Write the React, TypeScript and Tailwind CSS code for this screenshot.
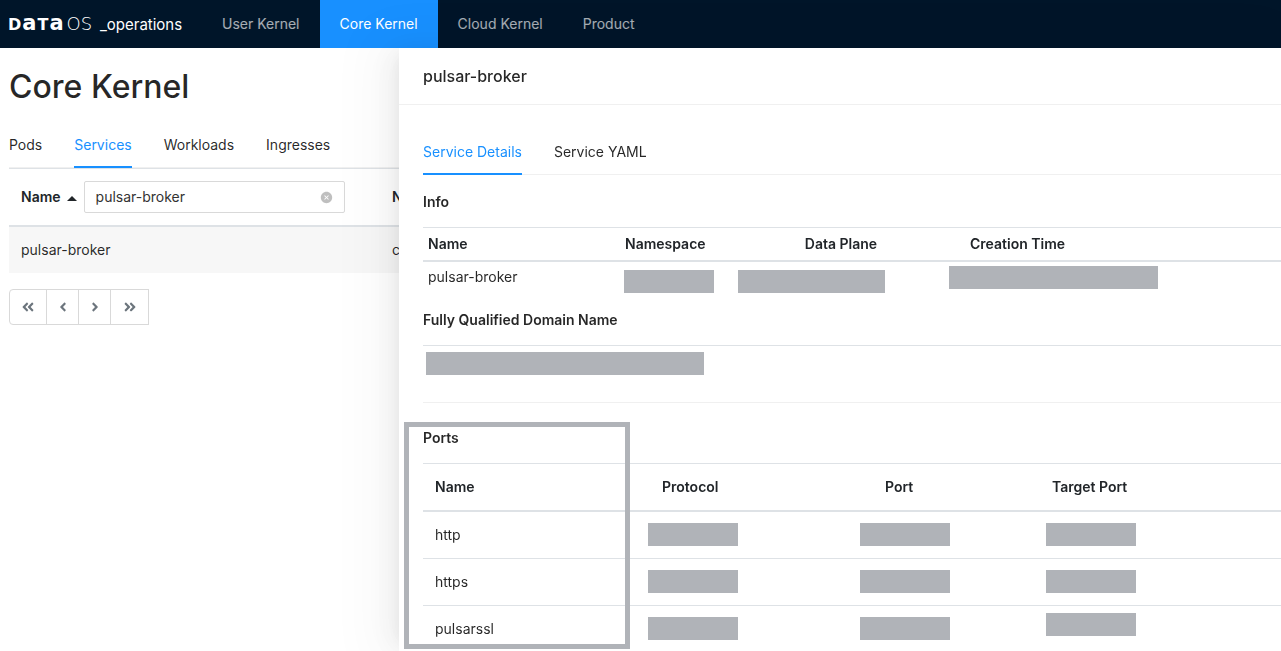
import type { ReactNode } from "react";
import { AiFillCloseCircle } from "react-icons/ai";
import { FaAngleDoubleLeft, FaAngleDoubleRight, FaAngleLeft, FaAngleRight } from "react-icons/fa";

const navItems = ["User Kernel", "Core Kernel", "Cloud Kernel", "Product"];
const pageTabs = ["Pods", "Services", "Workloads", "Ingresses"];
const drawerTabs = ["Service Details", "Service YAML"];
const ports = ["http", "https", "pulsarssl"];

function Logo() {
  return (
    <a href="#" aria-label="DataOS operations" className="flex h-12 w-[202px] items-center pb-0.5 pl-2 text-white">
      <span className="flex items-baseline leading-none">
        <span className="flex w-[92px] items-baseline gap-px whitespace-nowrap font-['DejaVu_Sans'] text-[16px] font-bold">
          <span>D</span>
          <span className="text-[21px]">a</span>
          <span>T</span>
          <span className="text-[21px]">a</span>
          <span className="pl-0.5 text-[18px] font-['DejaVu_Sans_Light','DejaVu_Sans'] font-extralight">OS</span>
        </span>
        <span className="text-[15px]">_operations</span>
      </span>
    </a>
  );
}

function TopNav() {
  return (
    <header className="flex h-12 bg-[#001529]">
      <Logo />
      <nav className="flex">
        {navItems.map((item) => (
          <a
            key={item}
            href="#"
            className={
              item === "Core Kernel"
                ? "bg-[#1890ff] px-5 leading-[48px] text-white"
                : "px-5 leading-[48px] text-white/65"
            }
          >
            {item}
          </a>
        ))}
      </nav>
    </header>
  );
}

function Tabs({ items, active }: { items: string[]; active: string }) {
  return (
    <div role="tablist" className="flex h-[46px] gap-8 shadow-[inset_0_-1px_0_#f0f0f0]">
      {items.map((item) => (
        <button
          key={item}
          type="button"
          role="tab"
          aria-selected={item === active}
          className={
            item === active
              ? "border-b-2 border-[#1890ff] pt-0.5 text-[#1890ff]"
              : "border-b-2 border-transparent pt-0.5"
          }
        >
          {item}
        </button>
      ))}
    </div>
  );
}

function PageButton({ label, className, children }: { label: string; className: string; children: ReactNode }) {
  return (
    <button
      type="button"
      aria-label={label}
      className={`flex h-9 items-center justify-center border border-[#d9d9d9] text-[#6c757d] ${className}`}
    >
      {children}
    </button>
  );
}

function ServicesPage() {
  return (
    <main className="px-[9px]">
      <h1 className="pt-[17px] text-[32px] leading-[44px] font-medium">Core Kernel</h1>
      <div className="pt-[13px]">
        <Tabs items={pageTabs} active="Services" />
      </div>
      <table className="w-full table-fixed border-separate border-spacing-0 border-t border-[#dee2e6] text-left">
        <colgroup>
          <col className="w-[371px]" />
          <col />
        </colgroup>
        <thead>
          <tr>
            <th className="h-[58px] border-b-2 border-[#dee2e6] px-3 font-semibold text-[#212529]">
              <div className="flex items-center">
                <label htmlFor="name-filter">Name</label>
                <svg viewBox="0 0 10 5" className="mt-0.5 ml-1.5 h-[5px] w-[10px]" fill="#212529">
                  <path d="M0 5 5 0l5 5z" />
                </svg>
                <div className="ml-[7px] flex h-8 w-[261px] items-center rounded-xs border border-[#d9d9d9] bg-white px-[11px]">
                  <input
                    id="name-filter"
                    type="text"
                    defaultValue="pulsar-broker"
                    className="min-w-0 flex-1 bg-transparent font-normal text-[#333333] outline-none"
                  />
                  <button type="button" aria-label="Clear filter" className="text-black/25">
                    <AiFillCloseCircle className="h-[13px] w-[13px]" />
                  </button>
                </div>
              </div>
            </th>
            <th className="border-b-2 border-[#dee2e6] px-3 font-semibold text-[#212529]">Namespace</th>
          </tr>
        </thead>
        <tbody>
          <tr className="bg-[#f7f7f7]">
            <td className="h-[46px] px-3">pulsar-broker</td>
            <td className="px-3">core</td>
          </tr>
        </tbody>
      </table>
      <div className="mt-4 flex">
        <PageButton label="First page" className="w-[38px] rounded-l">
          <FaAngleDoubleLeft className="h-[14px] w-[14px]" />
        </PageButton>
        <PageButton label="Previous page" className="-ml-px w-[33px]">
          <FaAngleLeft className="h-[14px] w-[14px]" />
        </PageButton>
        <PageButton label="Next page" className="-ml-px w-[33px]">
          <FaAngleRight className="h-[14px] w-[14px]" />
        </PageButton>
        <PageButton label="Last page" className="-ml-px w-[39px]">
          <FaAngleDoubleRight className="h-[14px] w-[14px]" />
        </PageButton>
      </div>
    </main>
  );
}

function Redacted({ className = "w-[90px]" }: { className?: string }) {
  return <div className={`h-[23px] bg-[#b0b3b8] ${className}`} />;
}

function InfoTable() {
  const head = "h-[34px] border-b-2 border-[#dee2e6] px-[5px] font-semibold text-[#212529]";
  return (
    <table className="w-full table-fixed border-separate border-spacing-0 border-t border-[#dee2e6] text-left">
      <colgroup>
        <col className="w-[197px]" />
        <col className="w-[114px]" />
        <col className="w-[214px]" />
        <col />
      </colgroup>
      <thead>
        <tr>
          <th className={head}>Name</th>
          <th className={head}>Namespace</th>
          <th className={`${head} text-center`}>Data Plane</th>
          <th className="border-b-2 border-[#dee2e6] pl-[22px] font-semibold text-[#212529]">Creation Time</th>
        </tr>
      </thead>
      <tbody>
        <tr className="align-top">
          <td className="h-[35px] px-[5px] pt-1 leading-[22px]">pulsar-broker</td>
          <td className="px-1 pt-2"><Redacted /></td>
          <td className="px-1 pt-2"><Redacted className="w-[147px]" /></td>
          <td className="px-px pt-1"><Redacted className="w-[209px]" /></td>
        </tr>
      </tbody>
    </table>
  );
}

function PortsTable() {
  const head = "border-b-2 border-[#dee2e6] font-semibold text-[#212529]";
  const cell = "border-b border-[#dee2e6] pl-3";
  return (
    <table className="w-full table-fixed border-separate border-spacing-0 border-t border-[#dee2e6] text-left">
      <colgroup>
        <col className="w-[213px]" />
        <col className="w-[212px]" />
        <col className="w-[186px]" />
        <col />
      </colgroup>
      <thead>
        <tr>
          <th className={`h-12 pl-3 ${head}`}>Name</th>
          <th className={`pl-[26px] ${head}`}>Protocol</th>
          <th className={`pl-[37px] ${head}`}>Port</th>
          <th className={`pl-[18px] ${head}`}>Target Port</th>
        </tr>
      </thead>
      <tbody>
        {ports.map((port) => (
          <tr key={port}>
            <td className={`h-[47px] ${cell}`}>{port}</td>
            <td className={`pb-0.5 ${cell}`}><Redacted /></td>
            <td className={`pb-0.5 ${cell}`}><Redacted /></td>
            <td className={port === "pulsarssl" ? `pb-2.5 ${cell}` : `pb-0.5 ${cell}`}>
              <Redacted />
            </td>
          </tr>
        ))}
      </tbody>
    </table>
  );
}

function ServiceDrawer() {
  return (
    <aside className="fixed top-12 right-0 bottom-0 left-[399px] overflow-hidden bg-white shadow-[-6px_0_16px_-8px_rgba(0,0,0,0.08),-9px_0_28px_0_rgba(0,0,0,0.05),-12px_0_48px_16px_rgba(0,0,0,0.03)]">
      <h2 className="border-b border-[#f0f0f0] px-6 py-4 text-base leading-6 font-medium">pulsar-broker</h2>
      <div className="pt-6 pl-6">
        <Tabs items={drawerTabs} active="Service Details" />
        <section>
          <h3 className="pt-4 pb-[14px] leading-[22px] font-semibold">Info</h3>
          <InfoTable />
        </section>
        <section className="border-b border-[#f0f0f0]">
          <h3 className="pt-3 pb-[14px] leading-[22px] font-semibold">Fully Qualified Domain Name</h3>
          <div className="h-[57px] border-t border-[#dee2e6] px-[3px] pt-1.5">
            <Redacted className="w-[278px]" />
          </div>
        </section>
        <section className="relative">
          <h3 className="pt-6 pb-[14px] leading-[22px] font-semibold">Ports</h3>
          <PortsTable />
          <div className="pointer-events-none absolute top-[19px] -left-[19px] h-[227px] w-[226px] border-[5px] border-[#b0b3b8]" />
        </section>
      </div>
    </aside>
  );
}

export default function App() {
  return (
    <div className="h-screen overflow-hidden bg-white font-['Inter',sans-serif] text-sm text-black/85">
      <TopNav />
      <ServicesPage />
      <ServiceDrawer />
    </div>
  );
}
